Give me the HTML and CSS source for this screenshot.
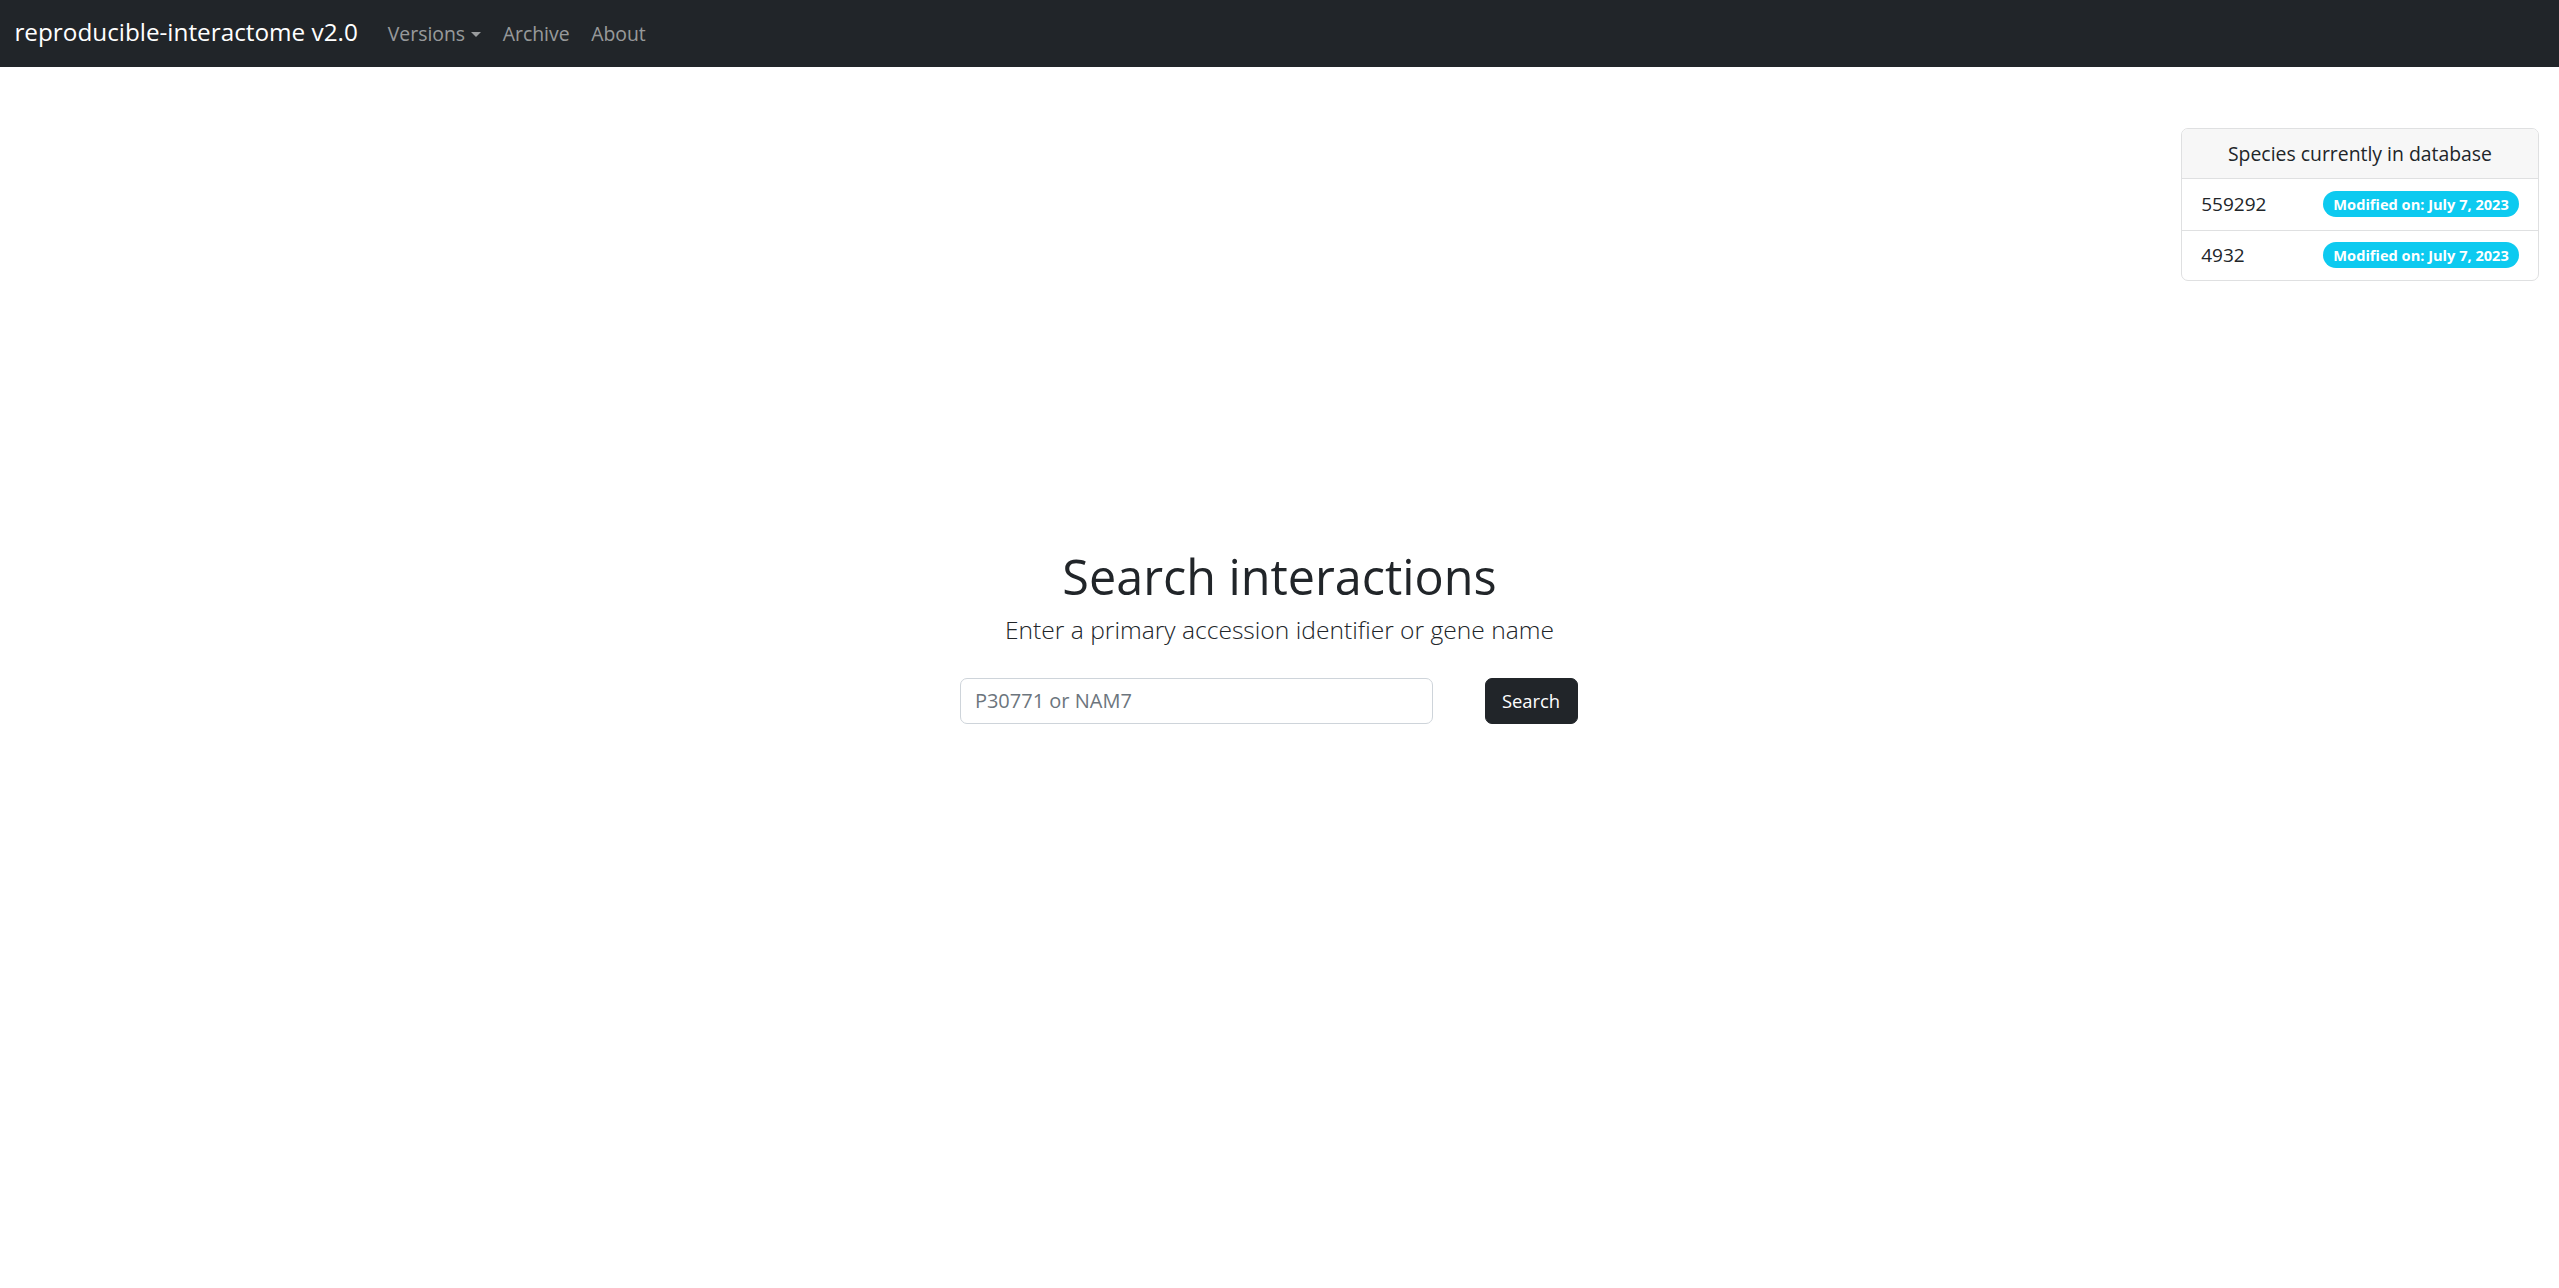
FILE: index.html
```html
<!DOCTYPE html>
<html lang="en">
<head>
<meta charset="utf-8">
<title>reproducible-interactome v2.0</title>
<link rel="stylesheet" href="styles.css">
</head>
<body>
<nav class="navbar">
  <a class="brand" href="#">reproducible-interactome v2.0</a>
  <ul class="nav">
    <li><a class="nav-link dropdown-toggle" href="#">Versions</a></li>
    <li><a class="nav-link" href="#">Archive</a></li>
    <li><a class="nav-link" href="#">About</a></li>
  </ul>
</nav>
<main class="page">
  <div class="side">
    <div class="card">
      <div class="card-header">Species currently in database</div>
      <ul class="list">
        <li class="list-item"><span>559292</span><span class="badge">Modified on: July 7, 2023</span></li>
        <li class="list-item"><span>4932</span><span class="badge">Modified on: July 7, 2023</span></li>
      </ul>
    </div>
  </div>
  <section class="search">
    <h1 class="title">Search interactions</h1>
    <p class="lead">Enter a primary accession identifier or gene name</p>
    <form class="search-form">
      <input class="form-control" type="text" placeholder="P30771 or NAM7">
      <button class="btn" type="button">Search</button>
    </form>
  </section>
</main>
</body>
</html>
```
FILE: styles.css
```css
* { box-sizing: border-box; }
html, body { margin: 0; padding: 0; }
body {
  font-family: "Open Sans", "Noto Sans", sans-serif;
  font-size: 19.2px;
  line-height: 1.5;
  color: #212529;
  background: #fff;
  min-height: 1288px;
}
a { text-decoration: none; }

.navbar {
  height: 67px;
  background: #212529;
  display: flex;
  align-items: center;
  padding: 0 14.4px;
}
.brand {
  color: #fff;
  font-size: 24.3px;
  line-height: 1.5;
  margin-right: 19.2px;
  white-space: nowrap;
  padding-bottom: 2px;
}
.nav {
  list-style: none;
  display: flex;
  margin: 0;
  padding: 0;
}
.nav-link {
  display: block;
  padding: 9.6px 10.8px;
  font-size: 19.4px;
  color: rgba(255,255,255,.55);
}
.dropdown-toggle::after {
  content: "";
  display: inline-block;
  margin-left: 6px;
  vertical-align: 4px;
  border-top: 5.8px solid;
  border-right: 5.8px solid transparent;
  border-left: 5.8px solid transparent;
  border-bottom: 0;
}

.page {
  display: flex;
  flex-direction: column;
}
.side {
  display: flex;
  justify-content: flex-end;
  padding: 61px 20px 0 0;
}
.card {
  width: 358px;
  border: 1px solid #dfe0e1;
  border-radius: 7px;
  overflow: hidden;
  background: #fff;
}
.card-header {
  background: #f7f7f7;
  border-bottom: 1px solid #dfe0e1;
  text-align: center;
  padding: 9.6px 10px;
  font-size: 19.4px;
  line-height: 29.6px;
}
.list { list-style: none; margin: 0; padding: 0; }
.list-item {
  display: flex;
  justify-content: space-between;
  align-items: center;
  padding: 9.6px 19.2px;
  height: 51px;
  font-size: 19px;
}
.list-item + .list-item { border-top: 1px solid #dfe0e1; height: 50px; }
.badge {
  background: #0dcaf0;
  color: #fff;
  font-weight: 700;
  font-size: 14.6px;
  line-height: 1;
  padding: 5.5px 10px;
  border-radius: 50px;
  white-space: nowrap;
}

.search {
  display: flex;
  flex-direction: column;
  align-items: center;
  margin-top: 266px;
  text-align: center;
}
.title {
  margin: 0 0 7px;
  font-size: 48.5px;
  font-weight: 400;
  line-height: 1.2;
}
.lead {
  margin: 0 0 29px;
  font-size: 24.6px;
  font-weight: 300;
  line-height: 1.5;
}
.search-form {
  display: flex;
  gap: 52px;
  padding-right: 22px;
}
.form-control {
  width: 473px;
  height: 46px;
  padding: 0 14.4px;
  border: 1px solid #ced4da;
  border-radius: 7px;
  font-family: inherit;
  font-size: 20px;
  color: #212529;
}
.form-control::placeholder { color: #6c757d; }
.btn {
  width: 93px;
  height: 46px;
  background: #212529;
  color: #fff;
  border: 1px solid #212529;
  border-radius: 7px;
  font-family: inherit;
  font-size: 18.4px;
  padding: 0;
}
```
